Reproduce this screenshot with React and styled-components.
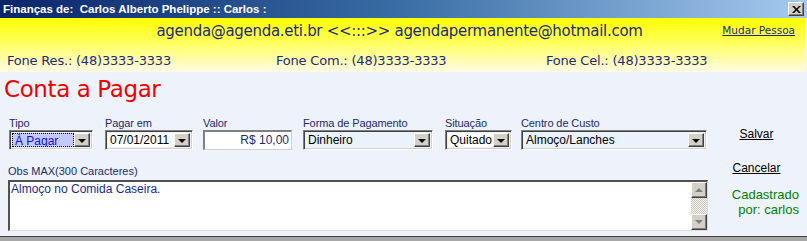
import React from "react";
import { styled, createGlobalStyle } from "styled-components";

const GlobalStyle = createGlobalStyle`
  body {
    margin: 0;
    background: #eef3fb;
    font-family: "Liberation Sans", Arial, sans-serif;
  }
`;

function Select({ value, $bg, $focus, $w }) {
  return (
    <SelectBox $w={$w}>
      <SelectValue $bg={$bg} $focus={$focus}>
        {value}
      </SelectValue>
      <DropButton>
        <Arrow />
      </DropButton>
    </SelectBox>
  );
}

export default function App() {
  return (
    <>
      <GlobalStyle />
      <Window>
        <TitleBar>
          <TitleText>Finanças de:&nbsp; Carlos Alberto Phelippe :: Carlos :</TitleText>
          <CloseButton>
            <svg width="9" height="7" viewBox="0 0 9 7">
              <path d="M0 0h2.2l2.3 2.4L6.8 0H9L5.6 3.5 9 7H6.8L4.5 4.6 2.2 7H0l3.4-3.5z" fill="#000" />
            </svg>
          </CloseButton>
        </TitleBar>
        <Header>
          <EmailRow>
            <Emails>agenda@agenda.eti.br &lt;&lt;:::&gt;&gt; agendapermanente@hotmail.com</Emails>
            <HeaderLink href="#">Mudar Pessoa</HeaderLink>
          </EmailRow>
          <PhoneRow>
            <Phone>Fone Res.: (48)3333-3333</Phone>
            <Phone>Fone Com.: (48)3333-3333</Phone>
            <Phone>Fone Cel.: (48)3333-3333</Phone>
          </PhoneRow>
        </Header>
        <Body>
          <PageTitle>Conta a Pagar</PageTitle>
          <Content>
            <MainColumn>
              <FieldRow>
                <Field>
                  <Label>Tipo</Label>
                  <Select value="À Pagar" $bg="#c4c8fc" $focus $w={84} />
                </Field>
                <Field>
                  <Label>Pagar em</Label>
                  <Select value="07/01/2011" $bg="#fff" $w={88} />
                </Field>
                <Field>
                  <Label>Valor</Label>
                  <ValueInput>R$ 10,00</ValueInput>
                </Field>
                <Field>
                  <Label>Forma de Pagamento</Label>
                  <Select value="Dinheiro" $bg="#eaf2fc" $w={130} />
                </Field>
                <Field>
                  <Label>Situação</Label>
                  <Select value="Quitado" $bg="#fff" $w={67} />
                </Field>
                <Field>
                  <Label>Centro de Custo</Label>
                  <Select value="Almoço/Lanches" $bg="#eaf2fc" $w={186} />
                </Field>
              </FieldRow>
              <ObsLabel>Obs MAX(300 Caracteres)</ObsLabel>
              <ObsBox>
                <ObsText>Almoço no Comida Caseira.</ObsText>
                <ScrollBar>
                  <ScrollButton>
                    <ScrollArrow $up />
                  </ScrollButton>
                  <ScrollTrack />
                  <ScrollButton>
                    <ScrollArrow />
                  </ScrollButton>
                </ScrollBar>
              </ObsBox>
            </MainColumn>
            <SideColumn>
              <ActionLink href="#">Salvar</ActionLink>
              <ActionLink href="#" $top={20}>Cancelar</ActionLink>
              <CreatedBy>
                Cadastrado
                <br />
                por: carlos
              </CreatedBy>
            </SideColumn>
          </Content>
        </Body>
        <BottomFrame />
      </Window>
    </>
  );
}

const Window = styled.div`
  width: 807px;
  height: 241px;
  display: flex;
  flex-direction: column;
  overflow: hidden;
`;

const TitleBar = styled.div`
  height: 18px;
  flex: none;
  display: flex;
  align-items: center;
  justify-content: space-between;
  padding: 0 3px 0 3px;
  background: linear-gradient(to right, #0a246a 0%, #3a6ea5 50%, #a6caf0 100%);
`;

const TitleText = styled.span`
  color: #fff;
  font-family: "Liberation Sans", Tahoma, sans-serif;
  font-weight: bold;
  font-size: 11.5px;
`;

const CloseButton = styled.div`
  width: 16px;
  height: 14px;
  box-sizing: border-box;
  display: flex;
  align-items: center;
  justify-content: center;
  background: #d4d0c8;
  border-top: 1px solid #fff;
  border-left: 1px solid #fff;
  border-right: 1px solid #404040;
  border-bottom: 1px solid #404040;
  box-shadow: inset -1px -1px 0 #808080;
`;

const Header = styled.div`
  height: 54px;
  flex: none;
  display: flex;
  flex-direction: column;
  background: linear-gradient(to bottom, #ffff00 0%, #ffff50 40%, #fffbe6 100%);
  border-right: 2px solid #f4f4f0;
`;

const EmailRow = styled.div`
  height: 26px;
  display: flex;
  align-items: center;
  position: relative;
  justify-content: center;
`;

const Emails = styled.span`
  font-family: "DejaVu Sans", Verdana, sans-serif;
  font-size: 15px;
  color: #1c2a7c;
  margin-right: 6px;
  letter-spacing: -0.3px;
`;

const HeaderLink = styled.a`
  position: absolute;
  right: 10px;
  top: 6px;
  font-family: "DejaVu Sans", Tahoma, sans-serif;
  font-size: 10.5px;
  color: #1c2a7c;
  text-decoration: underline;
`;

const PhoneRow = styled.div`
  flex: 1;
  display: grid;
  grid-template-columns: 269px 270px 1fr;
  align-items: center;
  padding-left: 7px;
  padding-top: 4px;
`;

const Phone = styled.span`
  font-family: "DejaVu Sans", Tahoma, sans-serif;
  font-size: 13px;
  color: #1c2a7c;
  letter-spacing: -0.2px;
`;

const Body = styled.div`
  flex: 1;
  display: flex;
  flex-direction: column;
  padding: 3px 0 0 0;
`;

const PageTitle = styled.h1`
  margin: 0 0 0 4px;
  font-family: "DejaVu Sans", Tahoma, sans-serif;
  font-weight: normal;
  font-size: 23px;
  color: #f00000;
  letter-spacing: -0.4px;
  line-height: 28px;
`;

const Content = styled.div`
  display: flex;
  margin-top: 13px;
`;

const MainColumn = styled.div`
  width: 700px;
  padding-left: 8px;
  display: flex;
  flex-direction: column;
`;

const FieldRow = styled.div`
  display: grid;
  grid-template-columns: 96px 98px 100px 142px 76px 186px;
  padding-left: 1px;
`;

const Field = styled.div`
  display: flex;
  flex-direction: column;
`;

const Label = styled.span`
  font-size: 11px;
  line-height: 14px;
  letter-spacing: -0.1px;
  color: #1c2a6c;
`;

const SelectBox = styled.div`
  width: ${(p) => p.$w}px;
  height: 20px;
  box-sizing: border-box;
  display: flex;
  border-top: 1px solid #808080;
  border-left: 1px solid #808080;
  border-right: 1px solid #fff;
  border-bottom: 1px solid #fff;
  box-shadow: inset 1px 1px 0 #404040, inset -1px -1px 0 #d4d0c8;
  padding: 2px;
`;

const SelectValue = styled.div`
  flex: 1;
  min-width: 0;
  background: ${(p) => p.$bg};
  color: ${(p) => (p.$focus ? "#1010e0" : "#000")};
  font-size: 12px;
  line-height: 14px;
  padding-left: 2px;
  white-space: nowrap;
  overflow: hidden;
  box-sizing: border-box;
  outline: ${(p) => (p.$focus ? "1px dotted #000" : "none")};
  outline-offset: -1px;
  border: ${(p) => (p.$focus ? "1px dotted #e8e000" : "none")};
`;

const DropButton = styled.div`
  width: 16px;
  flex: none;
  box-sizing: border-box;
  display: flex;
  align-items: center;
  justify-content: center;
  background: #d4d0c8;
  border-top: 1px solid #fff;
  border-left: 1px solid #fff;
  border-right: 1px solid #404040;
  border-bottom: 1px solid #404040;
  box-shadow: inset -1px -1px 0 #808080;
`;

const Arrow = styled.span`
  width: 0;
  height: 0;
  border-left: 4px solid transparent;
  border-right: 4px solid transparent;
  border-top: 4px solid #000;
  margin-top: 1px;
`;

const ValueInput = styled.div`
  width: 89px;
  height: 20px;
  box-sizing: border-box;
  background: #fff;
  border-top: 2px solid #808080;
  border-left: 2px solid #808080;
  border-right: 1px solid #d4d0c8;
  border-bottom: 1px solid #d4d0c8;
  text-align: right;
  font-size: 12px;
  line-height: 16px;
  padding-right: 2px;
  color: #1c2a6c;
`;

const ObsLabel = styled.span`
  font-size: 11px;
  line-height: 14px;
  color: #1c2a6c;
  margin-top: 14px;
`;

const ObsBox = styled.div`
  width: 700px;
  height: 51px;
  box-sizing: border-box;
  display: flex;
  background: #fff;
  border-top: 2px solid #505050;
  border-left: 2px solid #505050;
  border-right: 1px solid #e0ddd6;
  border-bottom: 1px solid #e0ddd6;
  margin-top: 2px;
`;

const ObsText = styled.div`
  flex: 1;
  font-size: 12px;
  line-height: 15px;
  color: #1a2a8c;
  padding-left: 1px;
`;

const ScrollBar = styled.div`
  width: 16px;
  display: flex;
  flex-direction: column;
`;

const ScrollButton = styled.div`
  height: 16px;
  box-sizing: border-box;
  display: flex;
  align-items: center;
  justify-content: center;
  background: #d4d0c8;
  border-top: 1px solid #fff;
  border-left: 1px solid #fff;
  border-right: 1px solid #404040;
  border-bottom: 1px solid #404040;
  box-shadow: inset -1px -1px 0 #808080;
`;

const ScrollArrow = styled.span`
  width: 0;
  height: 0;
  border-left: 4px solid transparent;
  border-right: 4px solid transparent;
  ${(p) => (p.$up ? "border-bottom: 4px solid #808080;" : "border-top: 4px solid #808080;")}
`;

const ScrollTrack = styled.div`
  flex: 1;
  background-color: #f0f0ee;
  background-image: repeating-conic-gradient(#c8c6c0 0% 25%, #f4f3f0 0% 50%);
  background-size: 2px 2px;
`;

const SideColumn = styled.div`
  flex: 1;
  display: flex;
  flex-direction: column;
  align-items: center;
  padding-top: 11px;
  padding-right: 8px;
`;

const ActionLink = styled.a`
  font-size: 12px;
  color: #000;
  text-decoration: underline;
  margin-top: ${(p) => p.$top || 0}px;
  margin-left: 6px;
`;

const CreatedBy = styled.div`
  align-self: flex-end;
  margin-top: 12px;
  text-align: right;
  font-size: 13px;
  line-height: 15px;
  color: #008000;
`;

const BottomFrame = styled.div`
  height: 4px;
  flex: none;
  background: #a8a8a8;
  border-top: 1px solid #404040;
`;
